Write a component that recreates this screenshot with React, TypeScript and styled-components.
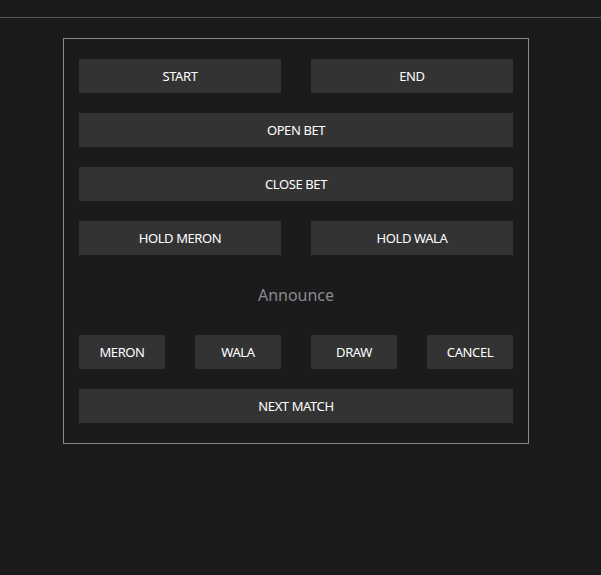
import React from "react";
import styled, { createGlobalStyle } from "styled-components";

const GlobalStyle = createGlobalStyle`
  html, body {
    margin: 0;
    padding: 0;
    background: #1b1b1d;
    font-family: "Noto Sans", "Open Sans", sans-serif;
  }
  * {
    box-sizing: border-box;
  }
`;

const Page = styled.div`
  width: 100vw;
  min-height: 100vh;
  background: #1b1b1d;
`;

const TopBar = styled.div`
  height: 18px;
  border-bottom: 1px solid #555557;
`;

const Panel = styled.div`
  width: 466px;
  margin: 20px 0 0 63px;
  border: 1px solid #8a8a8c;
  padding: 20px 15px;
  display: flex;
  flex-direction: column;
  gap: 20px;
`;

const Row = styled.div<{ $cols: number }>`
  display: grid;
  grid-template-columns: repeat(${(p) => p.$cols}, 1fr);
  column-gap: 30px;
`;

const Button = styled.button`
  height: 34px;
  border: none;
  background: #333334;
  color: #ffffff;
  font-family: "Noto Sans", "Open Sans", sans-serif;
  font-size: 13px;
  font-weight: 400;
  letter-spacing: -0.4px;
  padding: 0;
  cursor: pointer;
`;

const Announce = styled.div`
  height: 40px;
  display: flex;
  align-items: center;
  justify-content: center;
  color: #8a8a8c;
  font-size: 16px;
`;

export default function App() {
  return (
    <Page>
      <GlobalStyle />
      <TopBar />
      <Panel>
        <Row $cols={2}>
          <Button>START</Button>
          <Button>END</Button>
        </Row>
        <Row $cols={1}>
          <Button>OPEN BET</Button>
        </Row>
        <Row $cols={1}>
          <Button>CLOSE BET</Button>
        </Row>
        <Row $cols={2}>
          <Button>HOLD MERON</Button>
          <Button>HOLD WALA</Button>
        </Row>
        <Announce>Announce</Announce>
        <Row $cols={4}>
          <Button>MERON</Button>
          <Button>WALA</Button>
          <Button>DRAW</Button>
          <Button>CANCEL</Button>
        </Row>
        <Row $cols={1}>
          <Button>NEXT MATCH</Button>
        </Row>
      </Panel>
    </Page>
  );
}
